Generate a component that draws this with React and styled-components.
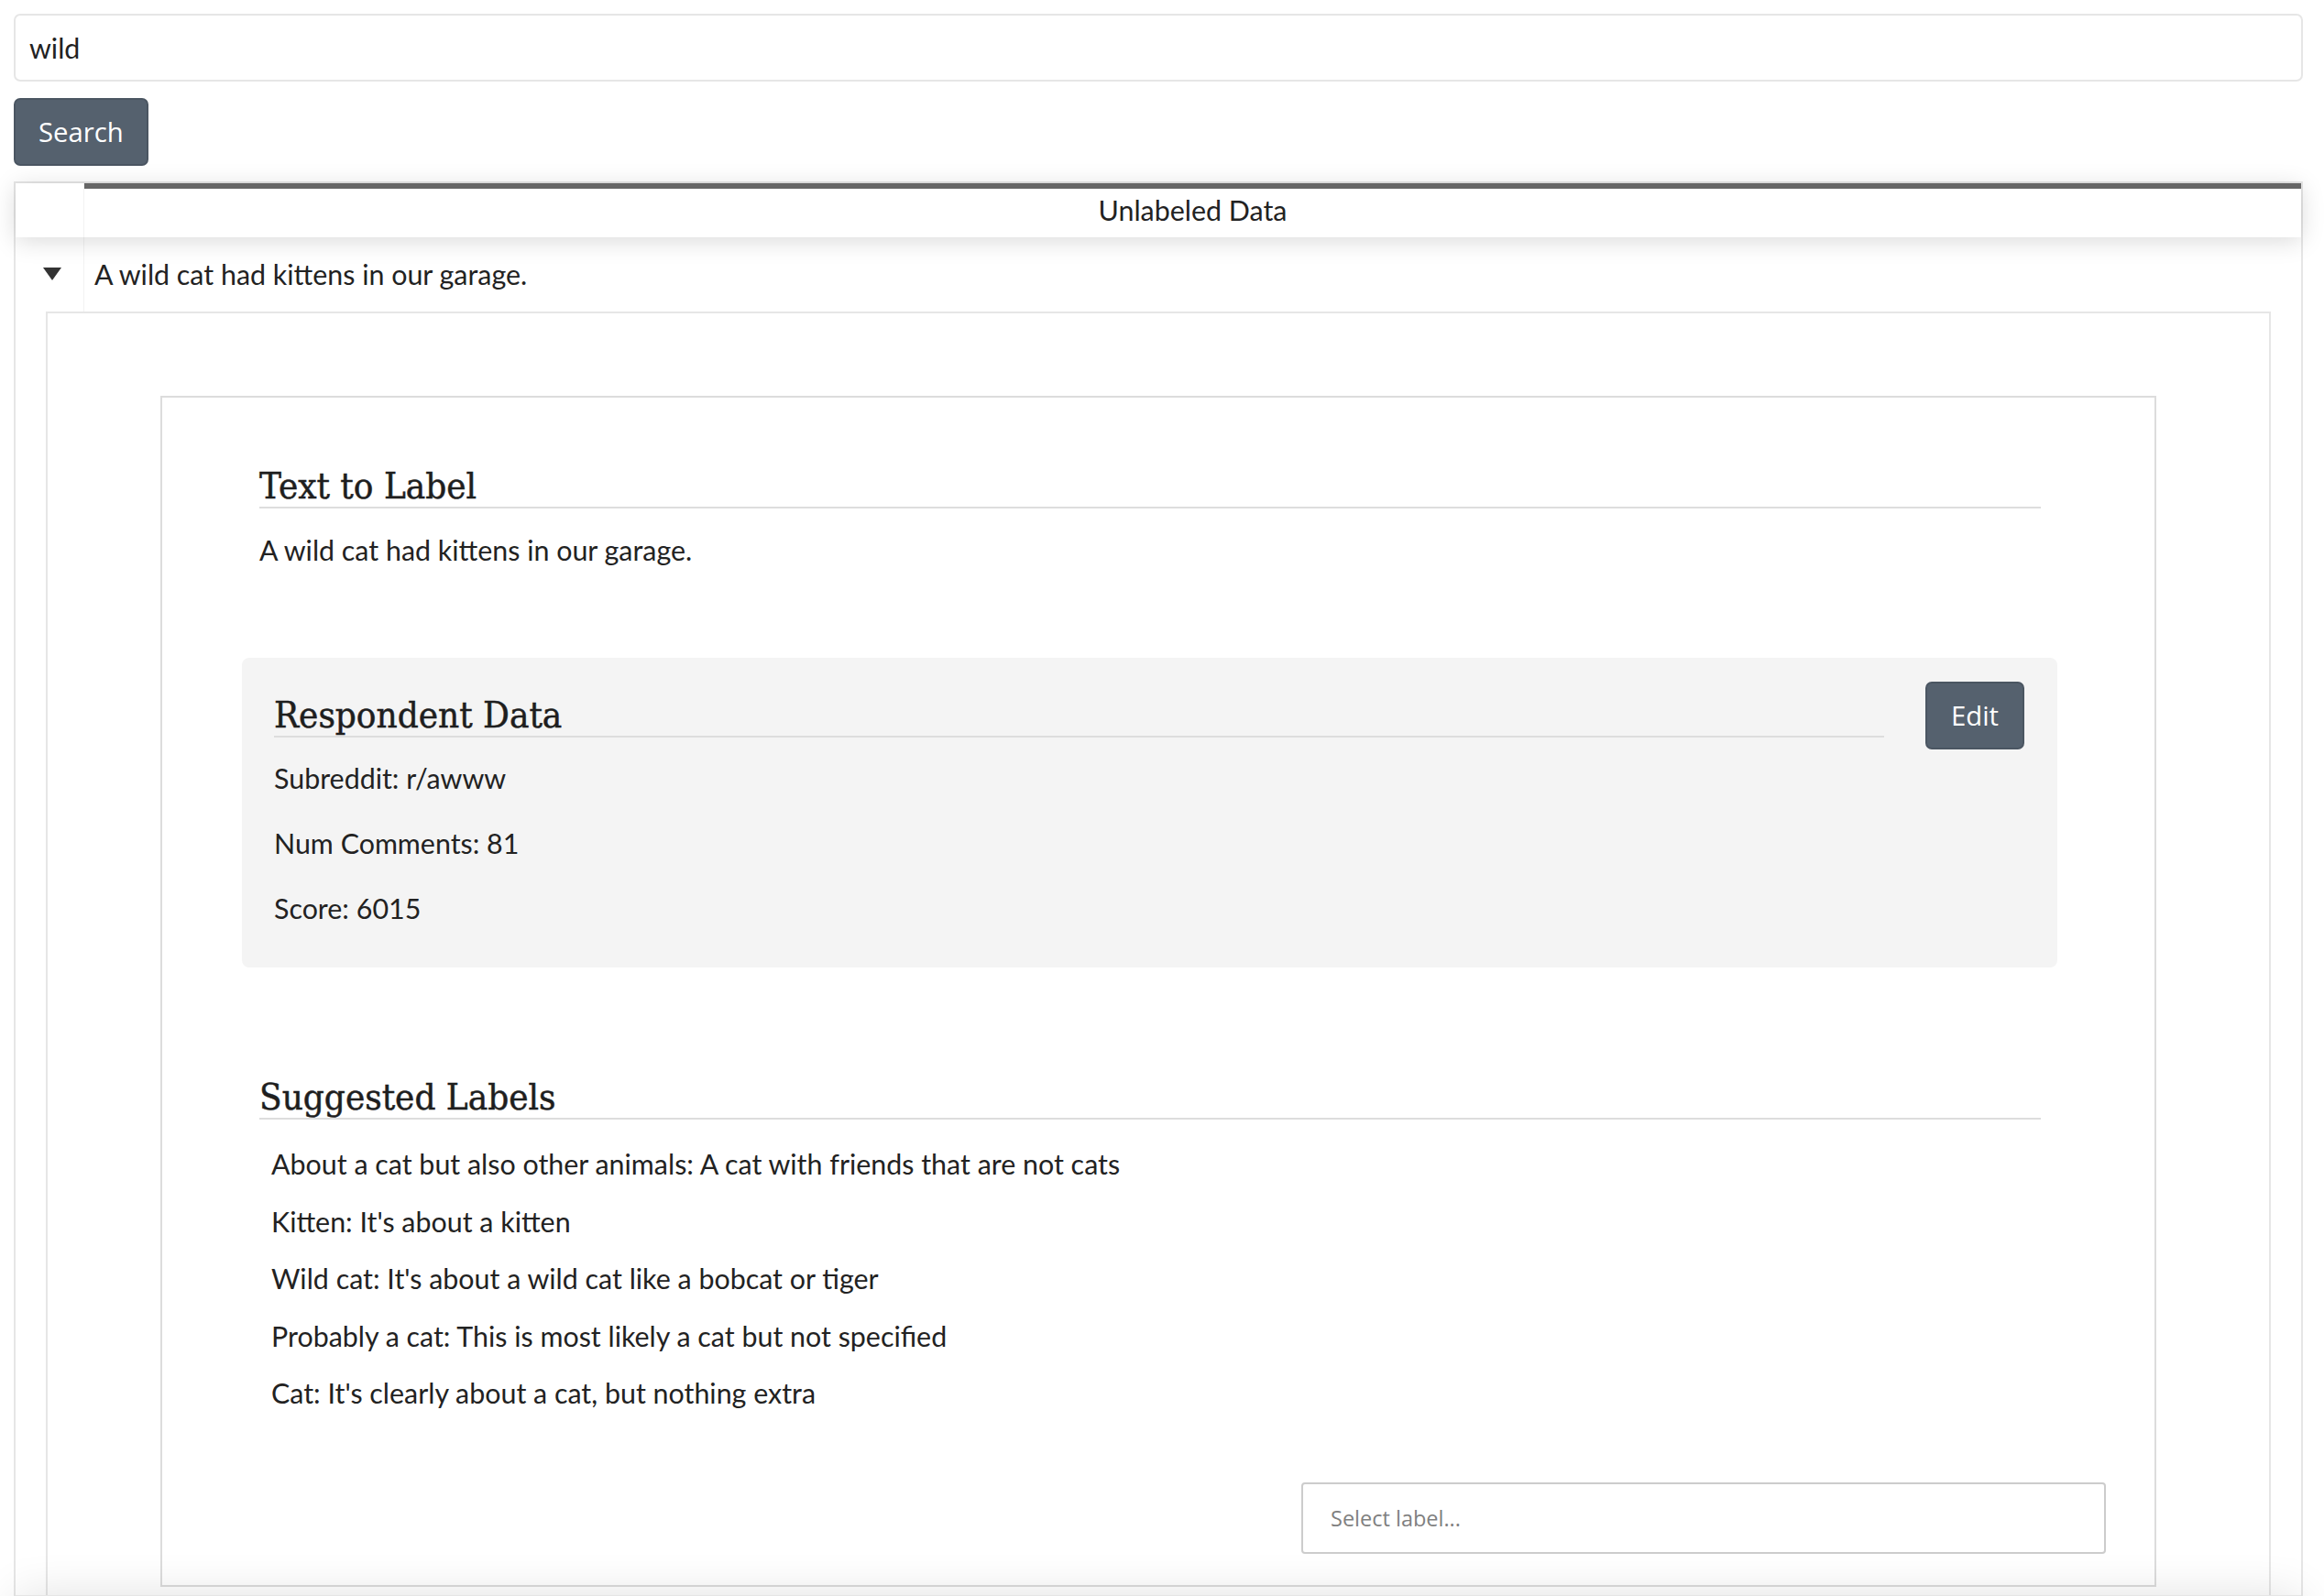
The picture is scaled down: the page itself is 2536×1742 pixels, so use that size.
import React from "react";
import styled, { createGlobalStyle, css } from "styled-components";

const GlobalStyle = createGlobalStyle`
  html, body { margin: 0; padding: 0; background: #ffffff; }
  body {
    font-family: Lato, "Open Sans", sans-serif;
    color: #222222;
    font-size: 30.4px;
  }
  * { box-sizing: border-box; }
`;

const Page = styled.div`
  display: flex;
  flex-direction: column;
  align-items: stretch;
  padding: 15px 23px 0 15px;
`;

const SearchInput = styled.input`
  display: block;
  width: 100%;
  height: 74px;
  border: 2px solid #e6e6e6;
  border-radius: 7px;
  padding: 0 15px;
  font-family: Lato, sans-serif;
  font-size: 30.4px;
  color: #222222;
  outline: none;
  background: #ffffff;
`;

const SolidButton = styled.button`
  background: #55616e;
  border: 2px solid #4b5662;
  border-radius: 7px;
  color: #ffffff;
  font-family: "Open Sans", sans-serif;
  font-size: 29.3px;
  line-height: 40px;
  padding: 15px 26px;
  cursor: pointer;
`;

const SearchButton = styled(SolidButton)`
  align-self: flex-start;
  margin-top: 18px;
  padding: 15px 25px;
`;

const Table = styled.div`
  margin-top: 17px;
  border: 2px solid #e6e6e6;
  display: flex;
  flex-direction: column;
`;

const HeaderRow = styled.div`
  display: flex;
  box-shadow: 0 4px 27px 0 rgba(0, 0, 0, 0.15);
`;

const ExpanderColumn = styled.div`
  flex: 0 0 75px;
  border-right: 1px solid rgba(0, 0, 0, 0.05);
  display: flex;
  align-items: center;
  justify-content: center;
`;

const HeaderCell = styled.div`
  flex: 1;
  text-align: center;
  padding: 12px 9px;
  line-height: 35px;
  ${(p) =>
    p.$sorted &&
    css`
      box-shadow: inset 0 6px 0 0 rgba(0, 0, 0, 0.6);
    `}
`;

const BodyRow = styled.div`
  display: flex;
  height: 81px;
`;

const Cell = styled.div`
  flex: 1;
  display: flex;
  align-items: center;
  padding: 0 11px;
  line-height: 35px;
`;

const Expander = styled.span`
  display: inline-block;
  width: 0;
  height: 0;
  border-left: 10px solid transparent;
  border-right: 10px solid transparent;
  border-top: 14px solid rgba(0, 0, 0, 0.8);
  transform: rotate(${(p) => (p.$open ? "0deg" : "-90deg")});
  margin-top: -2px;
  margin-left: 6px;
`;

const SubComponent = styled.div`
  margin: 0 33px;
  border: 2px solid #e6e6e6;
  border-bottom: none;
  padding: 90px 123px 9px;
`;

const Card = styled.div`
  border: 2px solid #dcdcdc;
  padding: 73px 53px 34px 87px;
  display: flex;
  flex-direction: column;
`;

const Section = styled.section`
  margin: ${(p) => p.$top || 0}px 71px 0 19px;
`;

const SectionTitle = styled.h3`
  margin: 0;
  font-family: "DejaVu Serif Condensed", "DejaVu Serif", serif;
  font-stretch: condensed;
  font-weight: normal;
  font-size: 40px;
  line-height: 46px;
  color: #1e1e1e;
  -webkit-text-stroke: 0.5px #1e1e1e;
  border-bottom: 2px solid #dddddd;
  ${(p) => p.$grow && css`flex: 1;`}
`;

const Paragraph = styled.p`
  margin: 28px 0 0;
  line-height: 35px;
`;

const RespondentBox = styled.div`
  margin: 100px 53px 0 0;
  background: #f4f4f4;
  border-radius: 8px;
  padding: 26px 36px 47px 35px;
`;

const RespondentHead = styled.div`
  display: flex;
  align-items: center;
  gap: 45px;
`;

const FieldList = styled.div`
  display: flex;
  flex-direction: column;
  gap: 36px;
  margin-top: 14px;
`;

const Field = styled.div`
  line-height: 35px;
`;

const LabelList = styled.ul`
  list-style: none;
  margin: 31px 0 0;
  padding: 0 0 0 13px;
  display: flex;
  flex-direction: column;
  gap: 27.6px;
`;

const LabelItem = styled.li`
  line-height: 35px;
`;

const SelectRow = styled.div`
  display: flex;
  justify-content: flex-end;
  margin-top: 80px;
`;

const SelectBox = styled.div`
  width: 878px;
  height: 78px;
  border: 2px solid #cccccc;
  border-radius: 4px;
  display: flex;
  align-items: center;
  padding: 0 30px;
  font-family: "Open Sans", sans-serif;
  font-size: 23.5px;
  color: #808080;
  background: #ffffff;
`;

const Pagination = styled.div`
  height: 80px;
  border-top: 2px solid rgba(0, 0, 0, 0.1);
  box-shadow: 0 0 50px 0 rgba(0, 0, 0, 0.12);
`;

const labels = [
  "About a cat but also other animals: A cat with friends that are not cats",
  "Kitten: It's about a kitten",
  "Wild cat: It's about a wild cat like a bobcat or tiger",
  "Probably a cat: This is most likely a cat but not specified",
  "Cat: It's clearly about a cat, but nothing extra",
];

const fields = [
  ["Subreddit", "r/awww"],
  ["Num Comments", "81"],
  ["Score", "6015"],
];

export default function App() {
  return (
    <>
      <GlobalStyle />
      <Page>
        <SearchInput defaultValue="wild" />
        <SearchButton>Search</SearchButton>
        <Table>
          <HeaderRow>
            <ExpanderColumn />
            <HeaderCell $sorted>Unlabeled Data</HeaderCell>
          </HeaderRow>
          <BodyRow>
            <ExpanderColumn>
              <Expander $open />
            </ExpanderColumn>
            <Cell>A wild cat had kittens in our garage.</Cell>
          </BodyRow>
          <SubComponent>
            <Card>
              <Section>
                <SectionTitle>Text to Label</SectionTitle>
                <Paragraph>A wild cat had kittens in our garage.</Paragraph>
              </Section>
              <RespondentBox>
                <RespondentHead>
                  <SectionTitle $grow>Respondent Data</SectionTitle>
                  <SolidButton>Edit</SolidButton>
                </RespondentHead>
                <FieldList>
                  {fields.map(([k, v]) => (
                    <Field key={k}>
                      {k}: {v}
                    </Field>
                  ))}
                </FieldList>
              </RespondentBox>
              <Section $top={118}>
                <SectionTitle>Suggested Labels</SectionTitle>
                <LabelList>
                  {labels.map((l) => (
                    <LabelItem key={l}>{l}</LabelItem>
                  ))}
                </LabelList>
              </Section>
              <SelectRow>
                <SelectBox>Select label...</SelectBox>
              </SelectRow>
            </Card>
          </SubComponent>
          <Pagination />
        </Table>
      </Page>
    </>
  );
}
